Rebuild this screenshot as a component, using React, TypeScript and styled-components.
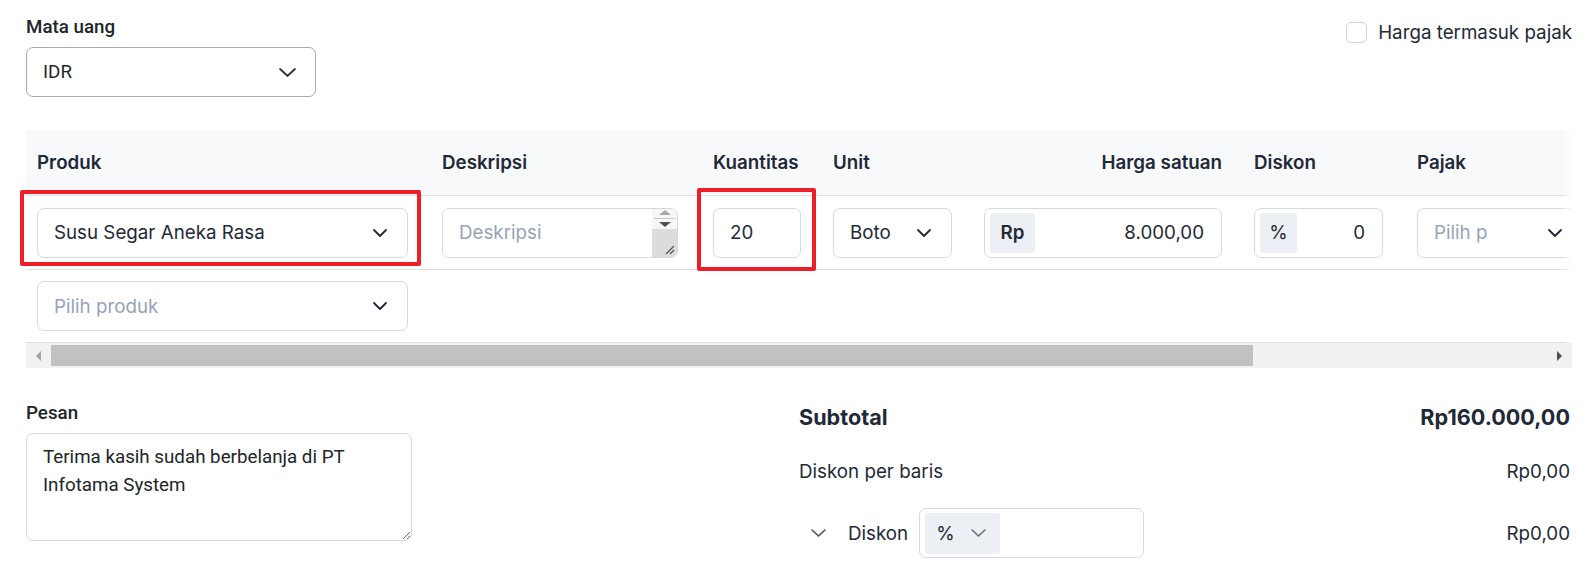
import React from "react";
import styled, { createGlobalStyle } from "styled-components";

const GlobalStyle = createGlobalStyle`
  html, body { margin: 0; padding: 0; background: #ffffff; }
  body { font-family: Inter, "Noto Sans", sans-serif; color: #1f2937; }
  *, *::before, *::after { box-sizing: border-box; }
`;

type Col = { key: string; label: string; track: number; w: number; align?: "left" | "right" };

const columns: Col[] = [
  { key: "produk", label: "Produk", track: 405, w: 371 },
  { key: "deskripsi", label: "Deskripsi", track: 271, w: 236 },
  { key: "kuantitas", label: "Kuantitas", track: 120, w: 88 },
  { key: "unit", label: "Unit", track: 151, w: 119 },
  { key: "harga", label: "Harga satuan", track: 270, w: 238, align: "right" },
  { key: "diskon", label: "Diskon", track: 163, w: 129 },
  { key: "pajak", label: "Pajak", track: 200, w: 166 },
  { key: "jumlah", label: "Jumlah", track: 334, w: 300, align: "right" },
];

const TRACKS = columns.map((c) => `${c.track}px`).join(" ");
const FS = "18.75px";

const Page = styled.div`
  width: 1572px;
  padding: 14px 0 40px 26px;
`;

const TopRow = styled.div`
  display: flex;
  justify-content: space-between;
  align-items: flex-start;
`;

const Field = styled.div`
  display: flex;
  flex-direction: column;
  gap: 7px;
`;

const FieldLabel = styled.div`
  font-family: Roboto, "Liberation Sans", sans-serif;
  font-weight: 500;
  font-size: ${FS};
  line-height: 26px;
  color: #212529;
`;

const CurrencySelect = styled.div`
  width: 290px;
  height: 50px;
  border: 1px solid #a4a9b3;
  border-radius: 7px;
  display: flex;
  align-items: center;
  justify-content: space-between;
  padding: 0 19px 0 16px;
  font-family: Roboto, "Liberation Sans", sans-serif;
  font-size: ${FS};
  color: #212529;
`;

const TaxToggle = styled.label`
  display: flex;
  align-items: center;
  gap: 11px;
  height: 21px;
  margin-top: 8px;
  font-size: ${FS};
  color: #1f2937;
  white-space: nowrap;
`;

const CheckBox = styled.span`
  width: 21px;
  height: 21px;
  border: 1.5px solid #cdd2da;
  border-radius: 5px;
  background: #fff;
`;

const TableFrame = styled.div`
  position: relative;
  width: 1546px;
  margin-top: 33px;
`;

const TableViewport = styled.div`
  position: relative;
  overflow: hidden;
  &::after {
    content: "";
    position: absolute;
    top: 0;
    right: 0;
    bottom: 0;
    width: 10px;
    background: linear-gradient(to right, rgba(255, 255, 255, 0), rgba(255, 255, 255, 0.95));
  }
`;

const TableGrid = styled.div`
  width: 1925px;
`;

const Row = styled.div<{ $head?: boolean; $h: number }>`
  display: grid;
  grid-template-columns: ${TRACKS};
  align-items: center;
  height: ${(p) => p.$h}px;
  padding-left: 11px;
  border-bottom: 1px solid #dde1e6;
  background: ${(p) => (p.$head ? "#f8f9fb" : "#ffffff")};
`;

const HeadCell = styled.div<{ $w: number; $align?: string }>`
  width: ${(p) => p.$w}px;
  text-align: ${(p) => p.$align || "left"};
  font-size: ${FS};
  font-weight: 600;
  color: #1f2937;
  white-space: nowrap;
`;

const Cell = styled.div<{ $w: number }>`
  width: ${(p) => p.$w}px;
`;

const SelectBox = styled.div`
  width: 100%;
  height: 50px;
  border: 1px solid #d5d9e0;
  border-radius: 7px;
  background: #fff;
  display: flex;
  align-items: center;
  justify-content: space-between;
  padding: 0 20px 0 16px;
  font-size: ${FS};
  color: #1f2937;
`;

const SelectText = styled.span<{ $placeholder?: boolean; $clip?: number }>`
  color: ${(p) => (p.$placeholder ? "#97a3b6" : "#1f2937")};
  white-space: nowrap;
  overflow: hidden;
  ${(p) => (p.$clip ? `max-width: ${p.$clip}px;` : "")}
`;

const TextInput = styled.div<{ $align?: string }>`
  width: 100%;
  height: 50px;
  border: 1px solid #d5d9e0;
  border-radius: 7px;
  display: flex;
  align-items: center;
  justify-content: ${(p) => (p.$align === "right" ? "flex-end" : "flex-start")};
  padding: 0 16px;
  font-size: ${FS};
  color: #1f2937;
`;

const AddonInput = styled.div`
  width: 100%;
  height: 50px;
  border: 1px solid #d5d9e0;
  border-radius: 7px;
  display: flex;
  align-items: center;
  padding: 0 17px 0 5px;
  font-size: ${FS};
  color: #1f2937;
`;

const Addon = styled.span<{ $w: number; $bold?: boolean }>`
  width: ${(p) => p.$w}px;
  height: 40px;
  background: #eceff3;
  border-radius: 3px;
  display: flex;
  align-items: center;
  justify-content: center;
  font-weight: ${(p) => (p.$bold ? 600 : 400)};
  flex: none;
`;

const AddonValue = styled.span`
  flex: 1;
  text-align: right;
`;

const DescBox = styled.div`
  width: 100%;
  height: 50px;
  border: 1px solid #d5d9e0;
  border-radius: 7px;
  overflow: hidden;
  display: flex;
`;

const DescArea = styled.textarea`
  flex: 1;
  min-width: 0;
  border: none;
  outline: none;
  resize: none;
  overflow: hidden;
  padding: 11px 16px;
  font-family: Inter, sans-serif;
  font-size: ${FS};
  line-height: 26px;
  color: #1f2937;
  &::placeholder {
    color: #97a3b6;
  }
`;

const ScrollStrip = styled.div`
  width: 25px;
  flex: none;
  display: flex;
  flex-direction: column;
  background: #f6f6f6;
`;

const StripButtons = styled.div`
  height: 20px;
  display: flex;
  flex-direction: column;
  align-items: center;
  justify-content: center;
  gap: 3px;
`;

const ArrowUp = styled.span`
  width: 0;
  height: 0;
  border-left: 6px solid transparent;
  border-right: 6px solid transparent;
  border-bottom: 5px solid #a8a8a8;
`;

const ArrowDown = styled.span`
  width: 0;
  height: 0;
  border-left: 6px solid transparent;
  border-right: 6px solid transparent;
  border-top: 5px solid #4f4f4f;
`;

const StripDivider = styled.span`
  width: 21px;
  height: 1px;
  background: #c8c8c8;
`;

const StripFill = styled.div`
  flex: 1;
  background: #dcdcdc;
  display: flex;
  align-items: flex-end;
  justify-content: flex-end;
  padding: 0 2px 2px 0;
`;

const Highlight = styled.div<{ $l: number; $t: number; $w: number; $h: number }>`
  position: absolute;
  left: ${(p) => p.$l}px;
  top: ${(p) => p.$t}px;
  width: ${(p) => p.$w}px;
  height: ${(p) => p.$h}px;
  border: 4px solid #ec1f29;
  border-radius: 2px;
  pointer-events: none;
`;

const ScrollTrack = styled.div`
  display: flex;
  align-items: center;
  height: 25px;
  background: #f1f1f1;
`;

const ScrollButton = styled.div<{ $dir: "left" | "right"; $dim?: boolean }>`
  width: 25px;
  height: 25px;
  flex: none;
  display: flex;
  align-items: center;
  justify-content: center;
  &::before {
    content: "";
    width: 0;
    height: 0;
    border-top: 5px solid transparent;
    border-bottom: 5px solid transparent;
    ${(p) =>
      p.$dir === "left"
        ? `border-right: 5px solid ${p.$dim ? "#a3a3a3" : "#505050"};`
        : `border-left: 5px solid ${p.$dim ? "#a3a3a3" : "#505050"};`}
  }
`;

const ScrollThumb = styled.div`
  width: 1202px;
  height: 21px;
  background: #c1c1c1;
  flex: none;
`;

const ScrollRest = styled.div`
  flex: 1;
`;

const Bottom = styled.div`
  width: 1546px;
  display: grid;
  grid-template-columns: 1fr 1fr;
  margin-top: 32px;
`;

const MessageArea = styled.textarea`
  width: 386px;
  height: 108px;
  border: 1px solid #d5d9e0;
  border-radius: 7px;
  padding: 10px 16px 7px;
  font-family: Roboto, "Liberation Sans", sans-serif;
  font-size: ${FS};
  line-height: 27.5px;
  color: #212529;
  resize: vertical;
  outline: none;
`;

const Summary = styled.div`
  display: flex;
  flex-direction: column;
  gap: 20px;
  padding-right: 2px;
`;

const SummaryRow = styled.div<{ $h: number }>`
  display: flex;
  align-items: center;
  justify-content: space-between;
  height: ${(p) => p.$h}px;
  font-size: ${FS};
  color: #1f2937;
`;

const SubtotalText = styled.span`
  font-size: 21.6px;
  font-weight: 700;
`;

const DiscountGroup = styled.div`
  display: flex;
  align-items: center;
  gap: 11px;
`;

const CollapseBtn = styled.span`
  width: 38px;
  display: flex;
  justify-content: center;
  color: #4b5563;
`;

const DiscountInput = styled.div`
  width: 225px;
  height: 50px;
  border: 1px solid #d5d9e0;
  border-radius: 7px;
  display: flex;
  align-items: center;
  padding: 0 5px;
`;

const UnitPicker = styled.span`
  width: 75px;
  height: 41px;
  background: #eceff3;
  border-radius: 3px;
  display: flex;
  align-items: center;
  gap: 16px;
  padding-left: 11px;
  color: #1f2937;
`;

const Chevron = ({ w = 14, h = 8, color = "#1f2937", sw = 1.8 }: { w?: number; h?: number; color?: string; sw?: number }) => (
  <svg width={w} height={h} viewBox="0 0 14 8" fill="none" preserveAspectRatio="none" style={{ flex: "none" }}>
    <path d="M1 1l6 6 6-6" stroke={color} strokeWidth={sw} strokeLinecap="round" strokeLinejoin="round" />
  </svg>
);

const Grip = () => (
  <svg width="10" height="10" viewBox="0 0 10 10">
    <path d="M9 1L1 9M9 5L5 9" stroke="#555" strokeWidth="1.2" />
  </svg>
);

export default function App() {
  return (
    <>
      <GlobalStyle />
      <Page>
        <TopRow>
          <Field>
            <FieldLabel>Mata uang</FieldLabel>
            <CurrencySelect>
              <span>IDR</span>
              <Chevron w={17} h={9} color="#333" />
            </CurrencySelect>
          </Field>
          <TaxToggle>
            <CheckBox />
            Harga termasuk pajak
          </TaxToggle>
        </TopRow>

        <TableFrame>
          <TableViewport>
            <TableGrid>
              <Row $head $h={66}>
                {columns.map((c) => (
                  <HeadCell key={c.key} $w={c.w} $align={c.align}>
                    {c.label}
                  </HeadCell>
                ))}
              </Row>
              <Row $h={74}>
                <Cell $w={371}>
                  <SelectBox>
                    <SelectText>Susu Segar Aneka Rasa</SelectText>
                    <Chevron />
                  </SelectBox>
                </Cell>
                <Cell $w={236}>
                  <DescBox>
                    <DescArea placeholder="Deskripsi" rows={1} />
                    <ScrollStrip>
                      <StripButtons>
                        <ArrowUp />
                        <StripDivider />
                        <ArrowDown />
                      </StripButtons>
                      <StripFill>
                        <Grip />
                      </StripFill>
                    </ScrollStrip>
                  </DescBox>
                </Cell>
                <Cell $w={88}>
                  <TextInput>20</TextInput>
                </Cell>
                <Cell $w={119}>
                  <SelectBox>
                    <SelectText $clip={41}>Botol</SelectText>
                    <Chevron />
                  </SelectBox>
                </Cell>
                <Cell $w={238}>
                  <AddonInput>
                    <Addon $w={45} $bold>Rp</Addon>
                    <AddonValue>8.000,00</AddonValue>
                  </AddonInput>
                </Cell>
                <Cell $w={129}>
                  <AddonInput>
                    <Addon $w={37}>%</Addon>
                    <AddonValue>0</AddonValue>
                  </AddonInput>
                </Cell>
                <Cell $w={166}>
                  <SelectBox>
                    <SelectText $placeholder $clip={53}>Pilih pajak</SelectText>
                    <Chevron />
                  </SelectBox>
                </Cell>
                <Cell $w={300}>
                  <TextInput $align="right">Rp160.000,00</TextInput>
                </Cell>
              </Row>
              <Row $h={73}>
                <Cell $w={371}>
                  <SelectBox>
                    <SelectText $placeholder>Pilih produk</SelectText>
                    <Chevron />
                  </SelectBox>
                </Cell>
              </Row>
            </TableGrid>
          </TableViewport>
          <ScrollTrack>
            <ScrollButton $dir="left" $dim />
            <ScrollThumb />
            <ScrollRest />
            <ScrollButton $dir="right" />
          </ScrollTrack>
          <Highlight $l={-6} $t={60} $w={401} $h={76} />
          <Highlight $l={671} $t={58} $w={119} $h={83} />
        </TableFrame>

        <Bottom>
          <Field>
            <FieldLabel>Pesan</FieldLabel>
            <MessageArea defaultValue={"Terima kasih sudah berbelanja di PT Infotama System"} />
          </Field>
          <Summary>
            <SummaryRow $h={34}>
              <SubtotalText>Subtotal</SubtotalText>
              <SubtotalText>Rp160.000,00</SubtotalText>
            </SummaryRow>
            <SummaryRow $h={34}>
              <span>Diskon per baris</span>
              <span>Rp0,00</span>
            </SummaryRow>
            <SummaryRow $h={50}>
              <DiscountGroup>
                <CollapseBtn>
                  <Chevron w={15} h={8} color="#4b5563" sw={1.6} />
                </CollapseBtn>
                <span>Diskon</span>
                <DiscountInput>
                  <UnitPicker>
                    <span>%</span>
                    <Chevron w={15} h={8} color="#6b7280" sw={1.6} />
                  </UnitPicker>
                </DiscountInput>
              </DiscountGroup>
              <span>Rp0,00</span>
            </SummaryRow>
          </Summary>
        </Bottom>
      </Page>
    </>
  );
}
